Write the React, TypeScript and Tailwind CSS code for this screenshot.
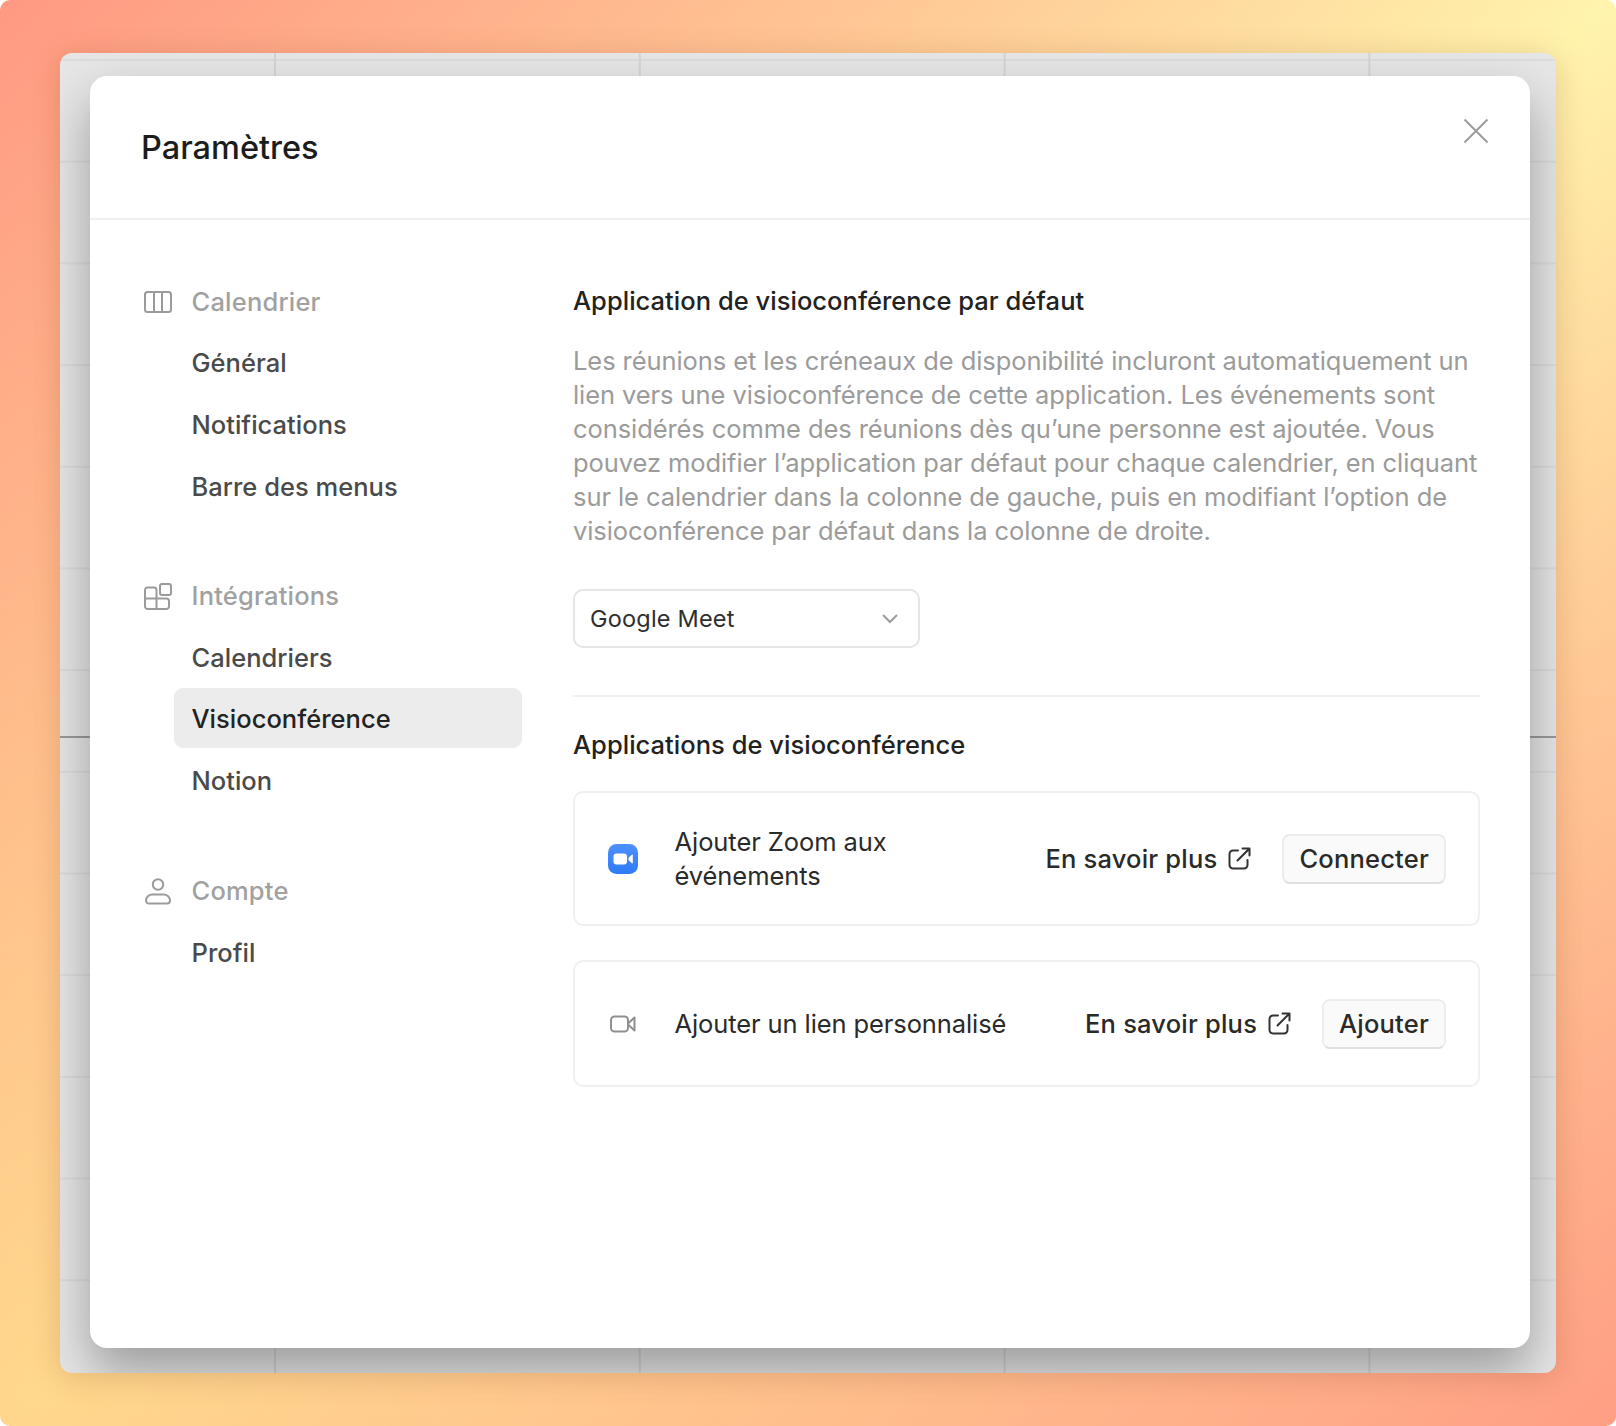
import { ReactNode } from 'react';

const ICON = '#9b9b9b';

function CalendarIcon() {
  return (
    <svg width="28" height="22" viewBox="0 0 28 22" fill="none" stroke={ICON} strokeWidth="2">
      <rect x="1" y="1" width="26" height="20" rx="2.5" />
      <path d="M10 1v20M18 1v20" />
    </svg>
  );
}

function IntegrationsIcon() {
  return (
    <svg width="28" height="27" viewBox="0 0 28 27" fill="none" stroke={ICON} strokeWidth="2">
      <path d="M1 15.500h21.500a2.500 2.500 0 0 1 2.500 2.500v5.500a2.500 2.500 0 0 1-2.500 2.500H3.500A2.500 2.500 0 0 1 1 23.500V7a2.500 2.500 0 0 1 2.500-2.500H10a2.500 2.500 0 0 1 2.500 2.500v19" />
      <rect x="16" y="1" width="11" height="11" rx="2" />
    </svg>
  );
}

function PersonIcon() {
  return (
    <svg width="26" height="27" viewBox="0 0 26 27" fill="none" stroke={ICON} strokeWidth="2">
      <circle cx="13" cy="6.5" r="5.2" />
      <path d="M7.5 16.5h11c3.6 0 6.5 2.6 6.5 6 0 1.8-1.2 3-3 3H4c-1.8 0-3-1.2-3-3 0-3.4 2.9-6 6.500-6z" />
    </svg>
  );
}

function ExternalIcon() {
  return (
    <svg width="23" height="23" viewBox="0 0 23 23" fill="none" stroke="#333" strokeWidth="2" strokeLinecap="round" strokeLinejoin="round">
      <path d="M10 3.500H5a3.500 3.500 0 0 0-3.500 3.500v11A3.500 3.500 0 0 0 5 21.500h11a3.500 3.500 0 0 0 3.500-3.500v-5" />
      <path d="M9.500 13.500 21 2M14.500 1.500H21.500V8.500" />
    </svg>
  );
}

function ZoomIcon() {
  return (
    <svg width="30" height="30" viewBox="0 0 30 30">
      <defs>
        <linearGradient id="zoomBg" x1="0" y1="0" x2="0" y2="1">
          <stop offset="0" stopColor="#4f90ff" />
          <stop offset="1" stopColor="#2d7bf6" />
        </linearGradient>
      </defs>
      <rect width="30" height="30" rx="8.500" fill="url(#zoomBg)" />
      <rect x="5.500" y="9.500" width="13.500" height="11" rx="3" fill="#fff" />
      <path d="M20.500 13.800 23.800 10.800c.5-.4 1-.2 1 .5v7.400c0 .7-.5.9-1 .5l-3.300-3z" fill="#fff" />
    </svg>
  );
}

function VideoIcon() {
  return (
    <svg width="26" height="18" viewBox="0 0 26 18" fill="none" stroke="#8f8f8f" strokeWidth="2" strokeLinejoin="round">
      <rect x="1" y="1.500" width="17" height="15" rx="3.500" />
      <path d="M18 8.500 24.500 2.500v13L18 9.500z" />
    </svg>
  );
}

function SectionHeader({ icon, label }: { icon: ReactNode; label: string }) {
  return (
    <div className="flex h-[60px] items-center">
      <div className="flex w-[28px] justify-center">{icon}</div>
      <span className="ml-[19.5px] text-[#a1a1a1]">{label}</span>
    </div>
  );
}

function NavItem({ label, active }: { label: string; active?: boolean }) {
  return (
    <div
      className={`ml-[30px] flex h-[60px] w-[348px] items-center rounded-[9px] pl-[17.5px] tracking-[0.02px] ${
        active ? 'mb-[3.2px] bg-[#ececec] pt-[2px] text-[#232323]' : 'mt-[1.6px] text-[#4a4a4a]'
      }`}
    >
      {label}
    </div>
  );
}

function LearnMore() {
  return (
    <a className="flex items-center gap-[11px] text-[#2a2a2a]">
      <span className="pt-[2px]">En savoir plus</span>
      <ExternalIcon />
    </a>
  );
}

function ActionButton({ label }: { label: string }) {
  return (
    <button className="ml-[31px] h-[50px] rounded-[8px] border-2 border-[#ececec] border-b-[#e0e0e0] bg-[#fafafa] px-[15px] pt-[2px] text-[#2a2a2a]">
      {label}
    </button>
  );
}

export default function App() {
  return (
    <div className="h-[1426px] bg-white">
      <div className="h-full rounded-[10px] bg-[linear-gradient(to_bottom_right,#ff9982_0%,transparent_50%,#ff9e84_100%),linear-gradient(to_top_right,#ffd78c_0%,#fff4ad_100%)] px-[60px] pb-[53px] pt-[52.500px]">
        {/* Calendar behind the dialog */}
        <div className="relative flex h-full overflow-hidden rounded-[12px] bg-[#e6e6e6] bg-[linear-gradient(to_right,#d4d4d4_2px,transparent_2px),linear-gradient(to_bottom,#dcdcdc_2px,transparent_2px)] bg-[size:364.800px_100%,100%_101.700px] bg-[position:214px_0,0_6px] pb-[25px] pl-[30px] pr-[26px] pt-[23.500px] shadow-[0_4px_30px_rgba(120,60,30,0.22)]">
          <div className="absolute left-0 right-0 top-[683px] h-[2px] bg-[#9a9a9a]" />

          {/* Dialog */}
          <div
            className="relative flex flex-1 flex-col rounded-[17px] bg-white text-[25.500px] font-medium tracking-[0.2px] shadow-[0_24px_50px_rgba(0,0,0,0.32)]"
            style={{ fontFamily: 'Inter, sans-serif' }}
          >
            <header className="relative flex h-[144px] shrink-0 items-start border-b-2 border-[#f0f0f0] pl-[51px] pt-[52px]">
              <h1 className="text-[32.500px] font-medium leading-[40px] tracking-normal text-[#1c1c1c]">Paramètres</h1>
              <button className="absolute right-[41px] top-[41.500px]">
                <svg width="26" height="26" viewBox="0 0 26 26" fill="none" stroke="#9c9c9c" strokeWidth="2" className="block">
                  <path d="M1.500 1.500l23 23M24.500 1.500l-23 23" />
                </svg>
              </button>
            </header>

            <div className="flex flex-1">
              <nav className="w-[483px] shrink-0 pl-[54px] pt-[52px]">
                <SectionHeader icon={<CalendarIcon />} label="Calendrier" />
                <NavItem label="Général" />
                <NavItem label="Notifications" />
                <NavItem label="Barre des menus" />

                <div className="mt-[49.800px]">
                  <SectionHeader icon={<IntegrationsIcon />} label="Intégrations" />
                </div>
                <NavItem label="Calendriers" />
                <NavItem label="Visioconférence" active />
                <NavItem label="Notion" />

                <div className="mt-[49.800px]">
                  <SectionHeader icon={<PersonIcon />} label="Compte" />
                </div>
                <NavItem label="Profil" />
              </nav>

              <main className="mr-[50px] flex-1 pt-[65px] text-[#2a2a2a]">
                <h2 className="text-[25.500px] font-medium leading-[32px] tracking-[0.03px] text-[#222]">
                  Application de visioconférence par défaut
                </h2>
                <p className="mt-[27px] text-[25.500px] font-normal leading-[34px] tracking-[-0.08px] text-[#9b9b9b]">
                  Les réunions et les créneaux de disponibilité incluront automatiquement un lien vers une visioconférence de cette application. Les événements sont considérés comme des réunions dès qu’une personne est ajoutée. Vous pouvez modifier l’application par défaut pour chaque calendrier, en cliquant sur le calendrier dans la colonne de gauche, puis en modifiant l’option de visioconférence par défaut dans la colonne de droite.
                </p>

                <div className="mt-[41px] flex h-[59px] w-[347px] items-center justify-between rounded-[10px] border-2 border-[#e5e5e5] pl-[15px] pr-[20px] text-[23.500px] font-normal">
                  <span className="text-[#2e2e2e]">Google Meet</span>
                  <svg width="16" height="10" viewBox="0 0 16 10" fill="none" stroke="#9c9c9c" strokeWidth="2">
                    <path d="M1 1l7 7 7-7" />
                  </svg>
                </div>

                <div className="mt-[47px] h-[2px] bg-[#f0f0f0]" />

                <h2 className="mt-[32px] text-[25.500px] font-medium leading-[32px] tracking-[0.03px] text-[#222]">
                  Applications de visioconférence
                </h2>

                <div className="mt-[30px] flex h-[135px] items-center rounded-[10px] border-2 border-[#f0f0f0] pl-[33px] pr-[32px] font-normal">
                  <div className="flex w-[30px] shrink-0 justify-center">
                    <ZoomIcon />
                  </div>
                  <span className="ml-[36.500px] w-[260px] leading-[34px] tracking-[-0.07px] text-[#2a2a2a]">Ajouter Zoom aux événements</span>
                  <div className="ml-auto flex items-center font-medium">
                    <LearnMore />
                    <ActionButton label="Connecter" />
                  </div>
                </div>

                <div className="mt-[34px] flex h-[127px] items-center rounded-[10px] border-2 border-[#f0f0f0] pl-[33px] pr-[32px] font-normal">
                  <div className="flex w-[30px] shrink-0 justify-center">
                    <VideoIcon />
                  </div>
                  <span className="ml-[36.500px] pt-[2px] tracking-[-0.1px] text-[#2a2a2a]">Ajouter un lien personnalisé</span>
                  <div className="ml-auto flex items-center font-medium">
                    <LearnMore />
                    <ActionButton label="Ajouter" />
                  </div>
                </div>
              </main>
            </div>
          </div>
        </div>
      </div>
    </div>
  );
}
